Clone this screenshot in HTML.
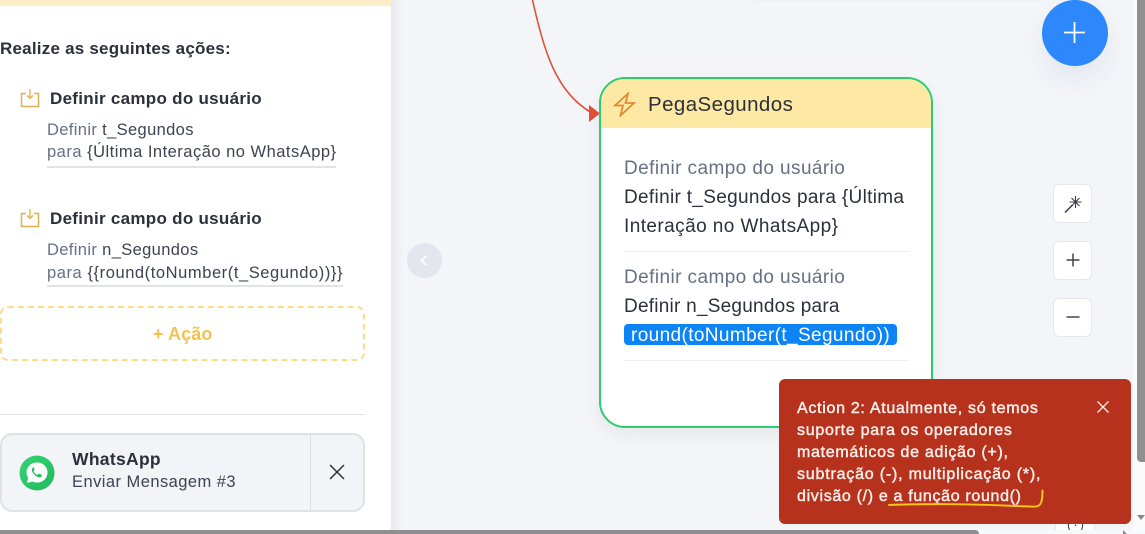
<!DOCTYPE html>
<html><head><meta charset="utf-8">
<style>
html,body{margin:0;padding:0;width:1145px;height:534px;overflow:hidden;background:#f3f5f8;font-family:"Liberation Sans",sans-serif}
#r{position:relative;width:1145px;height:534px;overflow:hidden;background:#f3f5f8}
.a{position:absolute}
.t{position:absolute;white-space:nowrap;line-height:1}
.g{color:#667085}
.d{color:#2b303b}
.b{font-weight:700}
.m{color:#fbeeea;font-size:16px;-webkit-text-stroke:.45px #fbeeea}
.btn{position:absolute;left:1053px;width:39px;height:39px;background:#fff;border:1px solid #e5e7eb;border-radius:6px;box-sizing:border-box}
</style></head><body><div id="r">
<div class="a" style="left:391px;top:0;width:12px;height:530px;background:linear-gradient(90deg,#e6e9ed,#f3f5f8)"></div>
<div class="a" style="left:0;top:0;width:391px;height:530px;background:#fff"></div>
<div class="a" style="left:0;top:0;width:391px;height:6px;background:#fdedc8"></div>

<div class="t b d" style="left:0;top:40px;font-size:17px;letter-spacing:.22px">Realize as seguintes ações:</div>

<svg class="a" style="left:20px;top:88px" width="20" height="20" viewBox="0 0 20 20" fill="none" stroke="#dcb050" stroke-width="1.500"><path d="M6 5.500H1.500v13h17v-13H14"/><path d="M10 1v9M7 7.500l3 3 3-3" stroke="#e0b040" stroke-width="1.300"/></svg>
<div class="t b d" style="left:50px;top:90px;font-size:17px;letter-spacing:.29px">Definir campo do usuário</div>
<div class="t" style="left:47px;top:122px;font-size:16.500px;letter-spacing:.36px"><span class="g">Definir</span> <span style="color:#3d4350">t_Segundos</span></div>
<div class="t" style="left:47px;top:144px;font-size:16.500px;letter-spacing:.49px"><span class="g">para</span> <span style="color:#3d4350">{Última Interação no WhatsApp}</span></div>
<div class="a" style="left:47px;top:166px;width:289px;height:2px;background:#e2e3e6"></div>

<svg class="a" style="left:20px;top:208px" width="20" height="20" viewBox="0 0 20 20" fill="none" stroke="#dcb050" stroke-width="1.500"><path d="M6 5.500H1.500v13h17v-13H14"/><path d="M10 1v9M7 7.500l3 3 3-3" stroke="#e0b040" stroke-width="1.300"/></svg>
<div class="t b d" style="left:50px;top:210px;font-size:17px;letter-spacing:.29px">Definir campo do usuário</div>
<div class="t" style="left:47px;top:242px;font-size:16.500px;letter-spacing:.36px"><span class="g">Definir</span> <span style="color:#3d4350">n_Segundos</span></div>
<div class="t" style="left:47px;top:265px;font-size:16.500px;letter-spacing:.57px"><span class="g">para</span> <span style="color:#3d4350">{{round(toNumber(t_Segundo))}}</span></div>
<div class="a" style="left:47px;top:285px;width:296px;height:2px;background:#e2e3e6"></div>

<div class="a" style="left:0;top:306px;width:365px;height:55px;box-sizing:border-box;border:2px dashed #fbdc87;border-radius:8px"></div>
<div class="t b" style="left:153px;top:325px;font-size:18px;color:#f3c14e;letter-spacing:.1px">+ Ação</div>

<div class="a" style="left:0;top:414px;width:365px;height:1px;background:#e2e3e6"></div>

<div class="a" style="left:0;top:433px;width:365px;height:79px;box-sizing:border-box;background:#f2f4f7;border:2px solid #dfe1e5;border-radius:12px"></div>
<div class="a" style="left:310px;top:435px;width:1px;height:75px;background:#dcdee2"></div>
<svg class="a" style="left:19px;top:455px" width="36" height="36" viewBox="0 0 36 36"><defs><linearGradient id="wa" x1="0" y1="0" x2="1" y2="1"><stop offset="0" stop-color="#34d574"/><stop offset="1" stop-color="#22b85c"/></linearGradient></defs><circle cx="18" cy="18" r="17.500" fill="url(#wa)"/><path d="M18 7.500c-6 0-10.500 4.400-10.500 10 0 2 .6 3.800 1.600 5.300L8 28l5.400-1.500c1.400.7 3 1.100 4.600 1.100 5.900 0 10.500-4.400 10.500-10.100S23.900 7.500 18 7.500z" fill="#fff"/><path d="M14.300 12.600c-.5 0-1.500.8-1.500 2.300 0 1.600 1.100 3.200 2.700 4.800 1.700 1.700 3.500 2.700 5 2.700 1.500 0 2.400-1.100 2.400-1.800 0-.5-.1-.8-.4-.9l-2.100-1c-.3-.1-.6 0-.8.2l-.7.9c-.2.2-.4.2-.7.1-1.600-.7-2.800-1.900-3.500-3.300-.1-.3-.1-.5.1-.7l.6-.7c.2-.2.2-.5.1-.8l-.8-2c-.2-.5-.4-.6-.8-.6z" fill="#27bd62"/></svg>
<div class="t b d" style="left:72px;top:451px;font-size:17.500px;letter-spacing:.3px;color:#2b303b">WhatsApp</div>
<div class="t" style="left:72px;top:474px;font-size:16.500px;letter-spacing:.45px;color:#3d4350">Enviar Mensagem #3</div>
<svg class="a" style="left:329px;top:464px" width="16" height="16" viewBox="0 0 16 16" stroke="#2b303b" stroke-width="1.500" fill="none"><path d="M1 1l14 14M15 1L1 15"/></svg>

<!-- top hint -->
<div class="a" style="left:753px;top:0;width:287px;height:1px;background:#eef0f3"></div>

<!-- collapse -->
<div class="a" style="left:407px;top:243px;width:35px;height:35px;border-radius:50%;background:#e3e6ec"></div>
<svg class="a" style="left:419px;top:254px" width="10" height="13" viewBox="0 0 10 13" fill="none" stroke="#fff" stroke-width="1.800"><path d="M7.500 1.500L2.500 6.500l5 5"/></svg>

<!-- connector -->
<svg class="a" style="left:520px;top:0" width="90" height="130" viewBox="0 0 90 130" fill="none"><path d="M12 -2C24 50 35 92 72 113" stroke="#e4503a" stroke-width="1.600"/><path d="M69 105L80 113.500L69 122Z" fill="#e4503a"/></svg>

<!-- node -->
<div class="a" style="left:599px;top:77px;width:334px;height:351px;box-sizing:border-box;border:2px solid #2ecc71;border-radius:26px;background:#fff;box-shadow:0 8px 18px rgba(30,40,60,.06);overflow:hidden">
<div class="a" style="left:0;top:0;width:330px;height:49px;background:#fee9a4"></div>
</div>
<svg class="a" style="left:612px;top:92px" width="24" height="25" viewBox="0 0 24 25" fill="none" stroke="#e08a35" stroke-width="1.800" stroke-linejoin="miter"><path d="M16 1.500L3 13.500h8L8.500 23.500 22 11h-8.500z"/></svg>
<div class="t" style="left:648px;top:95px;font-size:20.500px;letter-spacing:.42px;color:#2b303b">PegaSegundos</div>

<div class="t g" style="left:624px;top:159px;font-size:19px;letter-spacing:.42px">Definir campo do usuário</div>
<div class="t d" style="left:624px;top:188px;font-size:19px;letter-spacing:.32px">Definir t_Segundos para {Última</div>
<div class="t d" style="left:624px;top:217px;font-size:19px;letter-spacing:.43px">Interação no WhatsApp}</div>
<div class="a" style="left:624px;top:251px;width:285px;height:1px;background:#eff0f2"></div>
<div class="t g" style="left:624px;top:268px;font-size:19px;letter-spacing:.42px">Definir campo do usuário</div>
<div class="t d" style="left:624px;top:297px;font-size:19px;letter-spacing:.24px">Definir n_Segundos para</div>
<div class="a" style="left:624px;top:324px;width:273px;height:21px;background:#0d84f5;border-radius:4px"></div>
<div class="t" style="left:631px;top:326px;font-size:19px;letter-spacing:.38px;color:#fff">round(toNumber(t_Segundo))</div>
<div class="a" style="left:624px;top:360px;width:285px;height:1px;background:#eff0f2"></div>

<!-- FAB -->
<div class="a" style="left:1042px;top:0;width:66px;height:66px;border-radius:50%;background:#2d88fb;box-shadow:0 14px 26px rgba(30,60,110,.07)"></div>
<svg class="a" style="left:1063px;top:21px" width="24" height="24" viewBox="0 0 24 24" stroke="#fff" stroke-width="1.800" fill="none"><path d="M11.500 1v21M1 11.500h21"/></svg>

<div class="btn" style="top:184px"></div>
<svg class="a" style="left:1063px;top:195px" width="20" height="20" viewBox="0 0 20 20" fill="none" stroke="#3a3f4a" stroke-width="1.100"><path d="M2 17.500L9.500 10" stroke-width="1.500"/><path d="M12.500 1v12M6.500 7h12M8.500 3l8 8M16.500 3l-8 8"/></svg>
<div class="btn" style="top:241px"></div>
<svg class="a" style="left:1066px;top:253px" width="14" height="14" viewBox="0 0 14 14" stroke="#3f444f" stroke-width="1.500" fill="none"><path d="M7 .5v13M.5 7h13"/></svg>
<div class="btn" style="top:298px"></div>
<svg class="a" style="left:1066px;top:310px" width="14" height="14" viewBox="0 0 14 14" stroke="#3f444f" stroke-width="1.500" fill="none"><path d="M.5 7h13"/></svg>

<!-- hidden lower button -->
<div class="a" style="left:1055px;top:515px;width:40px;height:20px;background:#fff;border:1px solid #e5e7eb;box-sizing:border-box"></div>
<div class="t" style="left:1067px;top:518px;font-size:13px;color:#3f444f;letter-spacing:2px">(·)</div>

<!-- scrollbars -->
<div class="a" style="left:1133px;top:0;width:12px;height:534px;background:#fbfbfc"></div>
<div class="a" style="left:1137px;top:0;width:8px;height:462px;background:#8f8f8f;border-radius:0 0 0 4px"></div>
<div class="a" style="left:1137px;top:515px;width:0;height:0;border-left:4px solid transparent;border-right:4px solid transparent;border-top:5px solid #8a8a8a"></div>
<div class="a" style="left:0;top:530px;width:1145px;height:4px;background:#f7f8fa"></div>
<div class="a" style="left:0;top:530px;width:979px;height:4px;background:#8f8f8f;border-radius:0 4px 0 0"></div>
<div class="a" style="left:1123px;top:530px;width:0;height:0;border-top:4px solid transparent;border-left:4px solid #8a8a8a"></div>

<!-- toast -->
<div class="a" style="left:779px;top:379px;width:352px;height:145px;background:#b7321c;border-radius:6px"></div>
<div class="t m" style="left:797px;top:401px;letter-spacing:.7px">Action 2: Atualmente, só temos</div>
<div class="t m" style="left:797px;top:423px;letter-spacing:.73px">suporte para os operadores</div>
<div class="t m" style="left:797px;top:445px;letter-spacing:.7px">matemáticos de adição (+),</div>
<div class="t m" style="left:797px;top:467px;letter-spacing:.8px">subtração (-), multiplicação (*),</div>
<div class="t m" style="left:797px;top:489px;letter-spacing:.67px">divisão (/) e a função round()</div>
<svg class="a" style="left:1096px;top:400px" width="14" height="14" viewBox="0 0 14 14" stroke="#fbeeea" stroke-width="1.300" fill="none"><path d="M1.500 1.500l11 11M12.500 1.500l-11 11"/></svg>
<svg class="a" style="left:885px;top:488px" width="162" height="24" viewBox="0 0 162 24" fill="none" stroke="#f5c518" stroke-width="2" stroke-linecap="round"><path d="M4 17C40 15.500 90 16 130 18c10 .5 16 .8 21 .5 5-.5 6.500-5 6.500-16"/></svg>
</div></body></html>
